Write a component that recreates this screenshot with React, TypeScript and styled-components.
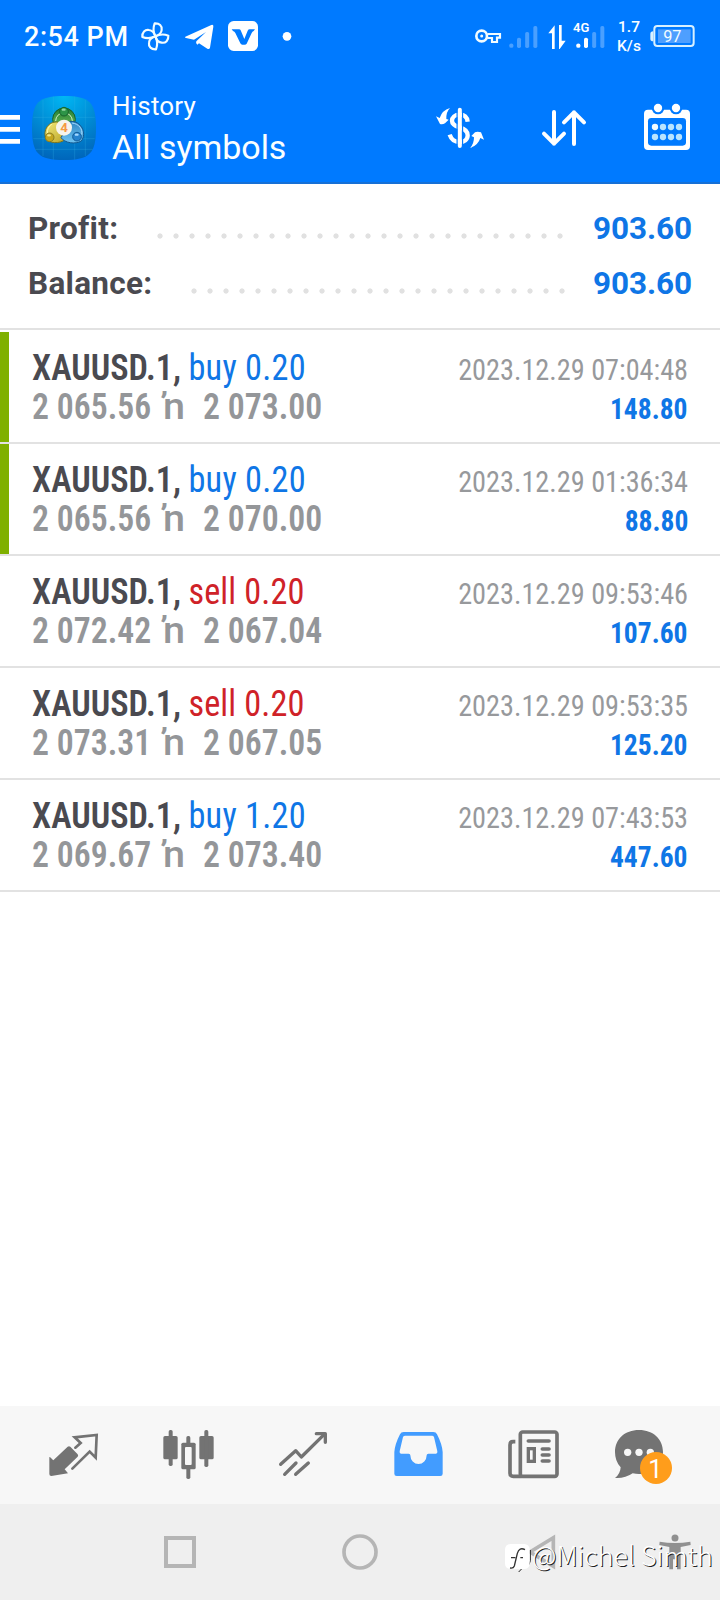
import React from 'react';
import styled, { createGlobalStyle } from 'styled-components';

const BLUE = '#007aff';
const FAINT = '#4aa0ff';
const GREY = '#737373';

const Global = createGlobalStyle`
  body { margin: 0; background: #fff; font-family: Roboto, "Liberation Sans", sans-serif; }
  * { box-sizing: border-box; }
`;

const Screen = styled.div`
  position: relative;
  display: flex;
  flex-direction: column;
  width: 720px;
  height: 1600px;
  overflow: hidden;
  background: #fff;
`;

const Header = styled.header`
  height: 184px;
  background: ${BLUE};
  border-bottom: 2px solid #1670d6;
  color: #fafeff;
`;

const StatusBar = styled.div`
  display: flex;
  align-items: center;
  height: 72px;
  padding-left: 24px;
`;

const Clock = styled.span`
  width: 117px;
  font-size: 27px;
  font-weight: 500;
  line-height: 32px;
  letter-spacing: 0.55px;
  padding-top: 2px;
  white-space: nowrap;
`;

const NetSpeed = styled.div`
  display: flex;
  flex-direction: column;
  width: 32px;
  margin-left: 7px;
  margin-right: -1px;
  padding-top: 1px;
  font-size: 15.5px;
  font-weight: 500;
  line-height: 19px;
  text-align: center;
`;

const Glyph = styled.svg<{ $ml?: number }>`
  display: block;
  flex: none;
  margin-left: ${(p) => p.$ml ?? 0}px;
  overflow: visible;
`;

const TitleBar = styled.div`
  display: flex;
  align-items: center;
  height: 108px;
  margin-top: 2px;
`;

const Titles = styled.div`
  display: flex;
  flex-direction: column;
  width: 323px;
  margin-left: 16px;
  padding-bottom: 2px;
  white-space: nowrap;
`;

const Eyebrow = styled.span`
  font-size: 26px;
  line-height: 40px;
  letter-spacing: 0.2px;
`;

const Title = styled.span`
  font-size: 34px;
  line-height: 42px;
  letter-spacing: -0.05px;
`;

const Summary = styled.section`
  display: flex;
  flex-direction: column;
  height: 146px;
  padding: 17px 28px 0;
  border-bottom: 2px solid #e2e2e2;
`;

const SummaryRow = styled.div`
  display: flex;
  align-items: center;
  height: 55px;
  font-size: 31.5px;
  font-weight: 700;
  color: #4a4a50;
`;

const SummaryLabel = styled.span<{ $w: number }>`
  width: ${(p) => p.$w}px;
  flex: none;
  letter-spacing: 0.3px;
`;

const Leader = styled.span<{ $count: number }>`
  width: ${(p) => p.$count * 16}px;
  height: 16px;
  margin-top: 15px;
  background: radial-gradient(circle at 8px 8px, #e1e1e1 2.2px, transparent 3px) 0 0 / 16px 16px repeat-x;
`;

const SummaryValue = styled.span`
  margin-left: auto;
  color: #0f76e6;
  letter-spacing: -0.1px;
`;

const Deals = styled.ul`
  margin: 2px 0 0;
  padding: 0;
  list-style: none;
  font-family: 'Roboto Condensed', Roboto, sans-serif;
`;

const Deal = styled.li`
  display: flex;
  height: 112px;
  padding-right: 32px;
  border-bottom: 2px solid #e2e2e2;
`;

const Marker = styled.span<{ $on?: boolean }>`
  flex: none;
  width: 9px;
  margin-right: 23px;
  background: ${(p) => (p.$on ? '#7fb000' : 'transparent')};
`;

const DealMain = styled.div`
  display: flex;
  flex-direction: column;
  flex: 1;
  padding-top: 16px;
  font-size: 37px;
  line-height: 39px;
  white-space: nowrap;
`;

const DealTitle = styled.div`
  transform: scaleX(0.927);
  transform-origin: left;
`;

const Instrument = styled.span`
  font-weight: 600;
  color: #4a4a50;
`;

const Side = styled.span<{ $sell?: boolean }>`
  margin-left: 8px;
  color: ${(p) => (p.$sell ? '#cf2228' : '#0f76e6')};
  letter-spacing: ${(p) => (p.$sell ? 0.1 : 0.25)}px;
`;

const Prices = styled.div`
  display: flex;
  align-items: baseline;
  height: 39px;
  font-weight: 600;
  color: #949699;
`;

const Price = styled.span`
  width: 130px;
  transform: scaleX(0.912);
  transform-origin: left;
`;

const Mark = styled.span`
  width: 41px;
  font-family: Roboto, sans-serif;
  font-weight: 500;
  font-size: 37px;
  transform: translateX(1px) scaleX(1.07);
  transform-origin: left;
`;

const DealSide = styled.div`
  display: flex;
  flex-direction: column;
  align-items: flex-end;
  padding-top: 18px;
  font-size: 30px;
  line-height: 39px;
  white-space: nowrap;
`;

const Stamp = styled.time`
  color: #97999c;
  transform: scaleX(0.942);
  transform-origin: right;
`;

const Amount = styled.span`
  font-weight: 700;
  color: #0f76e6;
  transform: scaleX(0.918);
  transform-origin: right;
`;

const Spacer = styled.div`
  flex: 1;
`;

const TabBar = styled.nav`
  display: flex;
  align-items: center;
  height: 98px;
  background: #f7f7f7;
`;

const SystemBar = styled.div`
  display: flex;
  align-items: center;
  height: 96px;
  background: #efefef;
`;

const Credit = styled.div`
  position: absolute;
  left: 505px;
  top: 1541px;
  display: flex;
  align-items: center;
  height: 34px;
  color: #fff;
  font-family: 'Noto Sans CJK SC', 'Noto Sans', sans-serif;
  font-size: 26.8px;
  font-weight: 300;
  line-height: 34px;
  white-space: nowrap;
  text-shadow: 1px 1px 0.6px #222;
`;

const CreditName = styled.span`
  padding-bottom: 7px;
`;

const deals = [
  { side: 'buy', lots: '0.20', from: '2 065.56', to: '2 073.00', time: '2023.12.29 07:04:48', amount: '148.80', marked: true },
  { side: 'buy', lots: '0.20', from: '2 065.56', to: '2 070.00', time: '2023.12.29 01:36:34', amount: '88.80', marked: true },
  { side: 'sell', lots: '0.20', from: '2 072.42', to: '2 067.04', time: '2023.12.29 09:53:46', amount: '107.60' },
  { side: 'sell', lots: '0.20', from: '2 073.31', to: '2 067.05', time: '2023.12.29 09:53:35', amount: '125.20' },
  { side: 'buy', lots: '1.20', from: '2 069.67', to: '2 073.40', time: '2023.12.29 07:43:53', amount: '447.60' },
];

const PinwheelIcon = () => (
  <Glyph width={30} height={32} viewBox="422 60 90 96" fill="none" stroke="#f2fcff" strokeWidth="6.500" strokeLinejoin="round">
    {[0, 90, 180, 270].map((a) => (
      <path key={a} transform={`rotate(${a} 465 109)`} d="M465 109 C459 97 459 80 463 70 C477 69 486 78 484 90 C483 100 475 106 465 109Z" />
    ))}
  </Glyph>
);

const TelegramIcon = () => (
  <Glyph $ml={13} width={30} height={32} viewBox="552 60 90 96" fill="#fff">
    <path d="M556 110 L634 75 Q641 73 640 80 L630 143 Q628 149 622 146 L597 130 L592 134 Q586 130 589 124 L618 96 L582 119 L558 114 Q553 112 556 110Z" />
  </Glyph>
);

const VIcon = () => (
  <Glyph $ml={14} width={30} height={32} viewBox="684 60 90 96">
    <rect x="684" y="63" width="90" height="90" rx="17" fill="#fff" />
    <path d="M695 88 H717 Q721 88 722 91 L733 117 L743 92 Q745 88 749 88 H765 L761 93 Q757 95 755 99 L740 131 Q738 134 734 134 H727 Q723 134 721 130 L706 99 Q704 94 699 93Z" fill={BLUE} />
  </Glyph>
);

const KeyIcon = () => (
  <Glyph $ml={183} width={26} height={32} viewBox="345 60 78 96" fill="none" stroke="#f2fcff">
    <circle cx="365" cy="108" r="16" strokeWidth="8" />
    <circle cx="365" cy="108" r="4.500" fill="#f2fcff" stroke="none" />
    <path d="M382 102 H420 V113 H411 V126 H396 V114 H382" strokeWidth="6.500" />
  </Glyph>
);

const SignalBars = ({ level, ml, label }: { level: number; ml: number; label?: string }) => (
  <Glyph $ml={ml} width={30} height={32} viewBox="446 60 90 96">
    <circle cx="453" cy="137" r="6.5" fill={level > 0 ? '#fff' : FAINT} />
    {[113, 96, 78].map((y, i) => (
      <rect key={y} x={470 + i * 24.5} y={y} width="12" height={144 - y} rx="5" fill={level > i + 1 ? '#fff' : FAINT} />
    ))}
    {label && (
      <text x="437" y="95" fill="#fff" fontSize="39" fontWeight="600" fontFamily="Roboto">{label}</text>
    )}
  </Glyph>
);

const TrafficIcon = () => (
  <Glyph $ml={9} width={18} height={32} viewBox="564 60 54 96" fill="#fff">
    <path d="M584 76 V147 H576 V100 H565Z M597 75 H605 V122 H617 L599 147 H597Z" />
  </Glyph>
);

const BatteryIcon = () => (
  <Glyph $ml={6} width={45} height={32} viewBox="871 60 135 96">
    <rect x="884" y="78" width="118" height="60" rx="9" fill="none" stroke="#d9f1ff" strokeWidth="6" />
    <rect x="895" y="88" width="98" height="41" fill="#4e9fff" />
    <path d="M881 94 Q872 94 872 102 V116 Q872 124 881 124Z" fill="#d9f1ff" />
    <text x="938" y="125" textAnchor="middle" fill="#f2fcff" fontSize="49" fontFamily="Roboto">97</text>
  </Glyph>
);

const AppLogo = () => (
  <Glyph $ml={12} width={64} height={64} viewBox="36 33 192 192">
    <defs>
      <radialGradient id="tile" cx="0.5" cy="0" r="1.05">
        <stop offset="0" stopColor="#00b8f4" />
        <stop offset="0.45" stopColor="#0090d8" />
        <stop offset="1" stopColor="#0062b8" />
      </radialGradient>
      <linearGradient id="leaf" x2="0" y2="1"><stop stopColor="#1e7c35" /><stop offset="1" stopColor="#7cc65a" /></linearGradient>
      <linearGradient id="sun" x2="1" y2="1"><stop stopColor="#f3ec7c" /><stop offset="1" stopColor="#b9a022" /></linearGradient>
      <linearGradient id="sea" x2="0" y2="1"><stop stopColor="#2f86c4" /><stop offset="1" stopColor="#6fc4f2" /></linearGradient>
    </defs>
    <path d="M36 129 C36 52 55 33 132 33 S228 52 228 129 S209 225 132 225 S36 206 36 129Z" fill="url(#tile)" />
    <path d="M69 45 V213 M100 34 V224 M164 34 V224 M196 45 V213 M40 97 H224 M40 161 H224 M46 193 H218" stroke="#35b2ea" strokeOpacity="0.4" strokeWidth="2" />
    <g strokeWidth="3">
      <circle cx="132" cy="103" r="34" fill="url(#leaf)" stroke="#175f2c" />
      <path d="M107 108 A25 25 0 0 1 157 108" fill="none" stroke="#d3f0c4" />
      <path d="M114 111 C79 108 67 145 80 164 C97 179 130 174 141 158Z" fill="url(#sun)" stroke="#7a7420" />
      <path d="M96 117 A32 32 0 0 0 82 146" fill="none" stroke="#fff7a8" />
      <path d="M150 109 C185 107 201 145 184 168 C166 179 134 174 123 158Z" fill="url(#sea)" stroke="#12568e" />
      <path d="M156 114 C177 116 189 133 185 149" fill="none" stroke="#a8dbff" />
      <circle cx="132" cy="80" r="13" fill="#2d9447" stroke="#17622b" />
      <circle cx="89" cy="157" r="13" fill="#c5a71f" stroke="#8b7d22" />
      <circle cx="171" cy="155" r="13" fill="#2683cf" stroke="#135c98" />
    </g>
    <ellipse cx="131" cy="74" rx="6" ry="3.5" fill="#94d5a0" />
    <ellipse cx="87" cy="151" rx="6" ry="3.5" fill="#f4e98c" />
    <ellipse cx="170" cy="149" rx="6" ry="3.5" fill="#a5d8ff" />
    <circle cx="132" cy="128" r="24" fill="#f6f4ec" />
    <text x="132" y="142" textAnchor="middle" fontSize="40" fontWeight="700" fontFamily="Roboto" fill="#f59a43">4</text>
  </Glyph>
);

const MenuIcon = () => (
  <Glyph width={20} height={30} viewBox="0 339 60 90" fill="#fff">
    <path d="M0 345H60V359H0Z M0 381H60V395H0Z M0 417H60V431H0Z" />
  </Glyph>
);

const CurrencyIcon = () => (
  <Glyph width={50} height={50} viewBox="15 24 150 150" fill="none" stroke="#fff">
    <path d="M113 80 C111 64 103 59 89 59 C74 59 66 68 66 77 C66 88 76 93 89 97 C103 101 113 107 113 121 C113 134 103 141 89 141 C73 141 64 134 59 119" strokeWidth="13" />
    <path d="M81.500 44 V156 M97.500 44 V156" stroke={BLUE} strokeWidth="4" />
    <path d="M89.500 44 V153" strokeWidth="12" strokeLinecap="round" />
    <path d="M18 64 L29 69 Q36 46 60 39 Q48 51 49 72 L56 74 L45 85 Q38 89 30 87Z" fill="#fff" stroke="none" />
    <path d="M162 134 L151 129 Q144 152 120 159 Q132 147 132 127 L124 123 L135 112 Q142 109 153 112Z" fill="#fff" stroke="none" />
  </Glyph>
);

const SortIcon = () => (
  <Glyph $ml={55} width={48} height={50} viewBox="540 309 144 150" fill="none" stroke="#fff" strokeWidth="12" strokeLinecap="round" strokeLinejoin="round">
    <path d="M582 336 V431 M552 401 L582 431 L612 401 M642 432 V337 M612 367 L642 337 L672 367" />
  </Glyph>
);

const CalendarIcon = () => (
  <Glyph $ml={55} width={48} height={50} viewBox="849 309 144 150">
    <rect x="852" y="329" width="138" height="121" rx="12" fill="#fff" />
    <circle cx="894" cy="324" r="19" fill={BLUE} />
    <circle cx="948" cy="324" r="19" fill={BLUE} />
    <circle cx="894" cy="324" r="12.500" fill="#fff" />
    <circle cx="948" cy="324" r="12.500" fill="#fff" />
    <rect x="864" y="354" width="114" height="83" rx="10" fill={BLUE} />
    {[381, 411].map((y) =>
      [885, 909, 933, 957].map((x) => <circle key={`${x}-${y}`} cx={x} cy={y} r="9.500" fill={x === 885 && y === 381 ? '#f2fcff' : '#b9e4ff'} />)
    )}
  </Glyph>
);

const TradeIcon = () => (
  <Glyph $ml={48} width={51} height={60} viewBox="144 75 153 180">
    <path d="M148 171 Q150 170 160 181 L203 140 Q207 137 211 140 L233 163 Q236 167 233 170 L194 208 L204 220 L154 228 Q148 228 148 222Z" fill={GREY} />
    <path d="M226 143 L242 129 L224 112 L290 105 L287 173 L269 155 L217 206" fill="none" stroke={GREY} strokeWidth="8" strokeLinecap="round" />
  </Glyph>
);

const CandlesIcon = () => (
  <Glyph $ml={64} width={51} height={60} viewBox="489 75 153 180" fill={GREY}>
    <rect x="490" y="108" width="43" height="70" rx="5" />
    <rect x="506" y="90" width="12" height="108" rx="5" />
    <rect x="598" y="108" width="43" height="70" rx="5" />
    <rect x="613" y="90" width="12" height="111" rx="5" />
    <rect x="559" y="108" width="12" height="129" rx="5" />
    <rect x="544" y="128" width="43" height="80" rx="5" />
    <rect x="555" y="141" width="20" height="54" rx="3" fill="#f7f7f7" />
  </Glyph>
);

const TrendIcon = () => (
  <Glyph $ml={65} width={48} height={60} viewBox="837 75 144 180" fill="none" stroke={GREY} strokeWidth="10" strokeLinecap="round" strokeLinejoin="round">
    <path d="M842 193 L887 152 L904 171 L972 104 M854 223 L888 189 M887 223 L925 189" />
    <path d="M949 101 H976 V127" />
  </Glyph>
);

const InboxIcon = () => (
  <Glyph $ml={67} width={50} height={60} viewBox="102 75 150 180">
    <path fill="#429cff" fillRule="evenodd" d="M131 96 H220 Q228 96 231 103 Q246 132 248 156 V221 Q248 228 241 228 H110 Q103 228 103 221 V156 Q105 132 120 103 Q123 96 131 96Z M136 107 Q131 107 129 111 L119 154 Q118 161 123 161 H146 Q151 161 151 166 A24.500 26 0 0 0 200 166 Q200 161 205 161 H228 Q233 161 232 154 L222 111 Q220 107 216 107Z" />
  </Glyph>
);

const NewsIcon = () => (
  <Glyph $ml={64} width={51} height={60} viewBox="444 75 153 180" fill="none" stroke={GREY} strokeWidth="11" strokeLinecap="round">
    <rect x="481" y="96" width="110" height="133" rx="7" />
    <path d="M466 125 H459 Q450 125 450 135 V220 Q450 229 460 229 H485" strokeLinecap="butt" />
    <path d="M505 123 H567 M547 147 H567 M547 165 H567 M547 183 H567" />
    <rect x="505" y="146" width="18" height="38" strokeWidth="10" />
  </Glyph>
);

const ChatIcon = () => (
  <Glyph $ml={56} width={57} height={60} viewBox="765 75 171 180">
    <path d="M837 90 C880 90 909 118 909 156 C909 194 880 222 837 222 Q828 222 818 220 Q795 236 765 234 Q781 222 782 202 Q765 184 765 156 C765 118 794 90 837 90Z" fill={GREY} />
    <circle cx="803" cy="157" r="11" fill="#f7f7f7" />
    <circle cx="837" cy="157" r="11" fill="#f7f7f7" />
    <circle cx="871" cy="157" r="11" fill="#f7f7f7" />
    <circle cx="888" cy="204" r="48" fill="#ff9d1b" />
    <text x="886" y="233" textAnchor="middle" fontSize="76" fontFamily="Roboto" fill="#fff">1</text>
  </Glyph>
);

const CreditLogo = () => (
  <Glyph width={27} height={32} viewBox="435 426 81 96">
    <path d="M476 516 Q484 504 498 500 Q510 496 511 482 V450" fill="none" stroke="#222" strokeWidth="3" />
    <rect x="435" y="432" width="74" height="75" rx="16" fill="#fff" />
    <path d="M495 449 Q478 440 472 460 L463 498 Q460 506 450 504 M453 473 H466 M481 473 H489" fill="none" stroke="#333" strokeWidth="4" />
  </Glyph>
);

export default function App() {
  return (
    <Screen>
      <Global />
      <Header>
        <StatusBar>
          <Clock>2:54 PM</Clock>
          <PinwheelIcon />
          <TelegramIcon />
          <VIcon />
          <Glyph $ml={24} width={10} height={32} viewBox="846 60 30 96" fill="#fff"><circle cx="861" cy="109" r="13" /></Glyph>
          <KeyIcon />
          <SignalBars level={0} ml={8} />
          <TrafficIcon />
          <SignalBars level={2} ml={10} label="4G" />
          <NetSpeed>
            <span>1.7</span>
            <span>K/s</span>
          </NetSpeed>
          <BatteryIcon />
        </StatusBar>
        <TitleBar>
          <MenuIcon />
          <AppLogo />
          <Titles>
            <Eyebrow>History</Eyebrow>
            <Title>All symbols</Title>
          </Titles>
          <CurrencyIcon />
          <SortIcon />
          <CalendarIcon />
        </TitleBar>
      </Header>

      <Summary>
        <SummaryRow>
          <SummaryLabel $w={123.5}>Profit:</SummaryLabel>
          <Leader $count={26} />
          <SummaryValue>903.60</SummaryValue>
        </SummaryRow>
        <SummaryRow>
          <SummaryLabel $w={158}>Balance:</SummaryLabel>
          <Leader $count={24} />
          <SummaryValue>903.60</SummaryValue>
        </SummaryRow>
      </Summary>

      <Deals>
        {deals.map((d) => (
          <Deal key={d.time}>
            <Marker $on={d.marked} />
            <DealMain>
              <DealTitle>
                <Instrument>XAUUSD.1,</Instrument>
                <Side $sell={d.side === 'sell'}>{d.side} {d.lots}</Side>
              </DealTitle>
              <Prices>
                <Price>{d.from}</Price>
                <Mark>ŉ</Mark>
                <Price>{d.to}</Price>
              </Prices>
            </DealMain>
            <DealSide>
              <Stamp>{d.time}</Stamp>
              <Amount>{d.amount}</Amount>
            </DealSide>
          </Deal>
        ))}
      </Deals>

      <Spacer />

      <TabBar>
        <TradeIcon />
        <CandlesIcon />
        <TrendIcon />
        <InboxIcon />
        <NewsIcon />
        <ChatIcon />
      </TabBar>
      <SystemBar>
        <Glyph $ml={164} width={32} height={36} viewBox="492 402 96 108" fill="none" stroke="#b5b5b5" strokeWidth="12">
          <rect x="498" y="414" width="84" height="84" />
        </Glyph>
        <Glyph $ml={146} width={36} height={36} viewBox="-54 402 108 108" fill="none" stroke="#b5b5b5" strokeWidth="11">
          <circle cx="0" cy="456" r="48" />
        </Glyph>
        <Glyph $ml={150} width={28} height={36} viewBox="504 402 84 108" fill="none" stroke="#b5b5b5" strokeWidth="11">
          <path d="M580 413 V499 L510 456Z" />
        </Glyph>
        <Glyph $ml={103} width={32} height={36} viewBox="897 402 96 108" fill="#909090">
          <circle cx="945" cy="414" r="10.500" />
          <path d="M899 425 Q945 433 991 425 L992 435 L962 441 V508 H951 V478 H939 V508 H928 V441 L898 435Z" />
        </Glyph>
      </SystemBar>

      <Credit>
        <CreditLogo />
        <CreditName>@Michel Simth</CreditName>
      </Credit>
    </Screen>
  );
}
